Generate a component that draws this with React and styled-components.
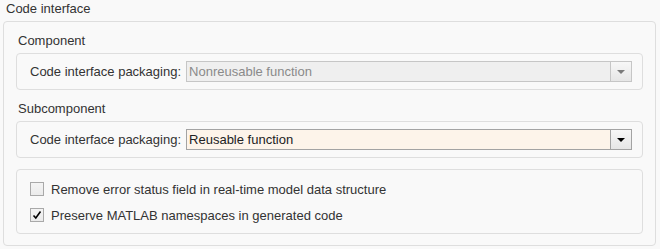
import styled, { createGlobalStyle } from "styled-components";

const GlobalStyle = createGlobalStyle`
  html, body {
    margin: 0;
    padding: 0;
    background: #f9f9f9;
  }
  body {
    font-family: "Liberation Sans", Arial, sans-serif;
    font-size: 13px;
    color: #333333;
  }
`;

const Page = styled.div`
  width: 660px;
  height: 249px;
  box-sizing: border-box;
  padding: 0 4px 3px 3px;
  background: #f9f9f9;
`;

const Title = styled.div`
  line-height: 18px;
  padding-left: 3px;
  margin-bottom: 3px;
`;

const Group = styled.div`
  border: 1px solid #dedede;
  border-radius: 4px;
  padding: 0 12px 11px 12px;
`;

const SectionLabel = styled.div`
  line-height: 18px;
  padding: 10px 0 3px 2px;
`;

const Panel = styled.div`
  border: 1px solid #dedede;
  border-radius: 4px;
  padding: ${(p) => (p.$checks ? "12px 13px 11px 13px" : "7px 10px 7px 13px")};
  margin-top: ${(p) => (p.$checks ? "11px" : "0")};
  display: flex;
  flex-direction: ${(p) => (p.$checks ? "column" : "row")};
  align-items: ${(p) => (p.$checks ? "stretch" : "center")};
  gap: ${(p) => (p.$checks ? "12px" : "0")};
`;

const FieldLabel = styled.span`
  margin-right: 5px;
  white-space: nowrap;
`;

const Combo = styled.div`
  flex: 1;
  display: flex;
  height: 21px;
  box-sizing: border-box;
  border: 1px solid ${(p) => (p.$disabled ? "#c6c6c6" : "#a3a3a3")};
`;

const ComboValue = styled.div`
  flex: 1;
  padding-left: 2px;
  line-height: 19px;
  background: ${(p) => (p.$disabled ? "#efefef" : "#fdf4ea")};
  color: ${(p) => (p.$disabled ? "#8a8a8a" : "#222222")};
`;

const ComboButton = styled.div`
  width: 20px;
  border-left: 1px solid ${(p) => (p.$disabled ? "#c6c6c6" : "#a3a3a3")};
  background: linear-gradient(#f7f7f7, #e6e6e6);
  display: flex;
  align-items: center;
  justify-content: center;
`;

const Arrow = styled.div`
  width: 0;
  height: 0;
  border-left: 4px solid transparent;
  border-right: 4px solid transparent;
  border-top: 4px solid ${(p) => (p.$disabled ? "#7a7a7a" : "#000000")};
`;

const CheckRow = styled.label`
  display: flex;
  align-items: center;
  height: 14px;
  gap: 7px;
`;

const Box = styled.span`
  width: 14px;
  height: 14px;
  box-sizing: border-box;
  border: 1px solid #a9a9a9;
  background: linear-gradient(#f4f4f4, #ebebeb);
  display: flex;
  align-items: center;
  justify-content: center;
`;

const Dropdown = ({ value, disabled }) => (
  <Panel>
    <FieldLabel>Code interface packaging:</FieldLabel>
    <Combo $disabled={disabled}>
      <ComboValue $disabled={disabled}>{value}</ComboValue>
      <ComboButton $disabled={disabled}>
        <Arrow $disabled={disabled} />
      </ComboButton>
    </Combo>
  </Panel>
);

const Check = ({ checked, children }) => (
  <CheckRow>
    <Box>
      {checked && (
        <svg width="10" height="10" viewBox="0 0 10 10">
          <path d="M1.5 5.5 L3.8 8 L8.5 1.5" fill="none" stroke="#000" strokeWidth="1.6" />
        </svg>
      )}
    </Box>
    {children}
  </CheckRow>
);

export default function App() {
  return (
    <>
      <GlobalStyle />
      <Page>
        <Title>Code interface</Title>
        <Group>
          <SectionLabel>Component</SectionLabel>
          <Dropdown value="Nonreusable function" disabled />
          <SectionLabel>Subcomponent</SectionLabel>
          <Dropdown value="Reusable function" />
          <Panel $checks>
            <Check>Remove error status field in real-time model data structure</Check>
            <Check checked>Preserve MATLAB namespaces in generated code</Check>
          </Panel>
        </Group>
      </Page>
    </>
  );
}
